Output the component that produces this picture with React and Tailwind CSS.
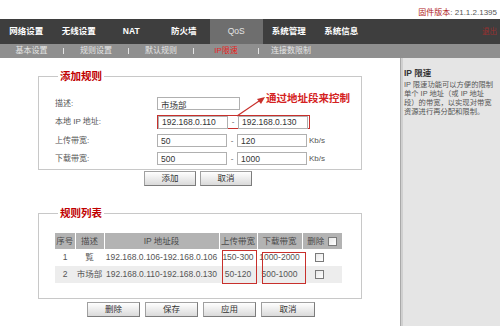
const tabs = ['网络设置', '无线设置', 'NAT', '防火墙', 'QoS', '系统管理', '系统信息']
const subTabs = ['基本设置', '规则设置', '默认规则', 'IP限速', '连接数限制']

const rules = [
  { id: 1, desc: '覧', ip: '192.168.0.106-192.168.0.106', up: '150-300', down: '1000-2000' },
  { id: 2, desc: '市场部', ip: '192.168.0.110-192.168.0.130', up: '50-120', down: '500-1000' },
]

function Btn({ children, w = 'w-[52px]' }) {
  return (
    <button className={`${w} h-[15px] border border-[#a0a0a0] border-r-[#7c7c7c] border-b-[#7c7c7c] bg-linear-to-b from-white to-[#dadada] text-[8.5px] leading-[13px] text-[#333]`}>
      {children}
    </button>
  )
}

function Field({ value, w = 'w-[70px]' }) {
  return (
    <input
      readOnly
      value={value}
      className={`${w} h-[13px] border border-[#b0b0b0] bg-white px-[3px] text-[8.5px] leading-[11px] text-[#333] outline-none`}
    />
  )
}

function Check() {
  return <span className="inline-block w-[9px] h-[9px] border border-[#7a7a7a] bg-linear-to-br from-[#e8e8e8] to-white" />
}

function Row({ label, children }) {
  return (
    <div className="flex items-center h-[13px]">
      <div className="w-[102px] text-[8px] text-[#555]">{label}</div>
      {children}
    </div>
  )
}

export default function App() {
  return (
    <div className="w-[500px] h-[326px] bg-white overflow-hidden font-['Liberation_Sans','Noto_Sans_CJK_SC',sans-serif]">
      {/* top strip with firmware */}
      <div className="h-[19px] flex items-end justify-end pr-[3px] pb-[1px] text-[8px] leading-[10px]">
        <span className="text-[#b01818]">固件版本</span>
        <span className="text-[#555]">: 21.1.2.1395</span>
      </div>

      {/* main nav */}
      <div className="flex h-[25px] bg-[#3e3e3e]">
        {tabs.map(t => (
          <div
            key={t}
            className={`w-[52.5px] flex items-center justify-center text-[8.5px] ${t === 'QoS' ? 'bg-[#6e6e6e] text-[#e4e4e4]' : 'font-bold text-white'}`}
          >
            {t}
          </div>
        ))}
        <div className="flex-1 flex items-center justify-end pr-[3px] text-[7.5px] text-[#9a3030]">退出</div>
      </div>

      {/* sub nav */}
      <div className="flex items-center h-[14px] bg-[#8f8f8f]">
        {subTabs.map((t, i) => (
          <div key={t} className="flex items-center">
            {i > 0 && <span className="w-[1px] h-[6px] bg-[#e4e4e4]" />}
            <div className={`${i === 0 ? 'w-[63px]' : 'w-[64px]'} text-center text-[8px] ${t === 'IP限速' ? 'text-[#e8251f]' : 'text-[#e6e6e6]'}`}>
              {t}
            </div>
          </div>
        ))}
      </div>

      <div className="flex h-[268px]">
        {/* left content */}
        <div className="relative w-[400px]">
          <fieldset className="ml-[38px] mt-[11px] w-[324px] border border-[#c8c8c8] pl-[16px] pt-[14px] pb-[4px]">
            <legend className="ml-[3px] px-[2px] text-[10.5px] leading-[14px] font-bold text-[#c00000]">添加规则</legend>
            <div className="flex flex-col gap-[5px]">
              <Row label="描述:">
                <Field value="市场部" w="w-[83px]" />
              </Row>
              <div className="flex items-center h-[14px]">
                <div className="w-[102px] text-[8px] text-[#555]">本地 IP 地址:</div>
                <div className="flex items-center h-[14px] border border-[#c8302c] pr-[1px]">
                  <Field value="192.168.0.110" />
                  <span className="w-[10px] text-center text-[8px] text-[#555]">-</span>
                  <Field value="192.168.0.130" />
                </div>
              </div>
              <Row label="上传带宽:">
                <Field value="50" />
                <span className="w-[10px] text-center text-[8px] text-[#555]">-</span>
                <Field value="120" />
                <span className="ml-[2px] text-[8px] text-[#555]">Kb/s</span>
              </Row>
              <Row label="下载带宽:">
                <Field value="500" />
                <span className="w-[10px] text-center text-[8px] text-[#555]">-</span>
                <Field value="1000" />
                <span className="ml-[2px] text-[8px] text-[#555]">Kb/s</span>
              </Row>
            </div>
          </fieldset>
          <div className="flex gap-[4px] pl-[144px] mt-[1px]">
            <Btn>添加</Btn>
            <Btn>取消</Btn>
          </div>

          <fieldset className="ml-[38px] mt-[20px] w-[324px] border border-[#c8c8c8] pl-[16px] pt-[13px] pb-[15px]">
            <legend className="ml-[3px] px-[2px] text-[10.5px] leading-[14px] font-bold text-[#c00000]">规则列表</legend>
            <table className="border-collapse text-[8.5px] text-[#555]">
              <thead>
                <tr className="h-[16px] bg-[#b3b3b3] text-[#4a4a4a]">
                  <th className="w-[20px] font-normal border-r border-white">序号</th>
                  <th className="w-[29px] font-normal border-r border-white">描述</th>
                  <th className="w-[115px] font-normal border-r border-white">IP 地址段</th>
                  <th className="w-[38px] font-normal border-r border-white">上传带宽</th>
                  <th className="w-[45px] font-normal border-r border-white">下载带宽</th>
                  <th className="w-[40px] font-normal">
                    <div className="flex items-center justify-center gap-[4px]">
                      <span>删除</span>
                      <Check />
                    </div>
                  </th>
                </tr>
              </thead>
              <tbody>
                {rules.map((r, i) => (
                  <tr key={r.id} className={`h-[17px] ${i === 1 ? 'bg-[#ededed]' : 'bg-white'}`}>
                    <td className="text-center">{r.id}</td>
                    <td className="text-center">{r.desc}</td>
                    <td className="text-center">{r.ip}</td>
                    <td className="text-center">{r.up}</td>
                    <td className="text-center">{r.down}</td>
                    <td className="text-center">
                      <div className="flex justify-center pr-[6px]">
                        <Check />
                      </div>
                    </td>
                  </tr>
                ))}
              </tbody>
            </table>
          </fieldset>
          <div className="flex gap-[5px] pl-[87px] mt-[3px]">
            <Btn w="w-[53px]">删除</Btn>
            <Btn w="w-[53px]">保存</Btn>
            <Btn w="w-[53px]">应用</Btn>
            <Btn w="w-[54px]">取消</Btn>
          </div>

          {/* annotations */}
          <div className="absolute left-[266px] top-[33px] text-[10.5px] leading-[14px] font-bold text-[#d42222]">通过地址段来控制</div>
          <svg className="absolute left-[230px] top-[35px]" width="40" height="30" viewBox="0 0 40 30">
            <line x1="7" y1="23" x2="32" y2="6" stroke="#c8302c" strokeWidth="1.2" />
            <polygon points="35,4 27,6 31,11" fill="#c8302c" />
          </svg>
          <div className="absolute left-[222px] top-[192px] w-[35px] h-[34px] border border-[#c8302c]" />
          <div className="absolute left-[262px] top-[194px] w-[44px] h-[32px] border border-[#c8302c]" />
        </div>

        {/* help panel */}
        <div className="flex-1 bg-[#e5e5e5] border-l border-[#a9a9a9] shadow-[inset_2px_0_0_#d0d0d0] pl-[3px] pt-[10px]">
          <div className="text-[8.5px] leading-[10px] font-bold text-[#333]">IP 限速</div>
          <div className="mt-[2px] text-[7.3px] leading-[9px] text-[#555] whitespace-nowrap">
            <div>IP 限速功能可以方便的限制</div>
            <div>单个 IP 地址（或 IP 地址</div>
            <div>段）的带宽，以实现对带宽</div>
            <div>资源进行再分配和限制。</div>
          </div>
        </div>
      </div>
    </div>
  )
}
